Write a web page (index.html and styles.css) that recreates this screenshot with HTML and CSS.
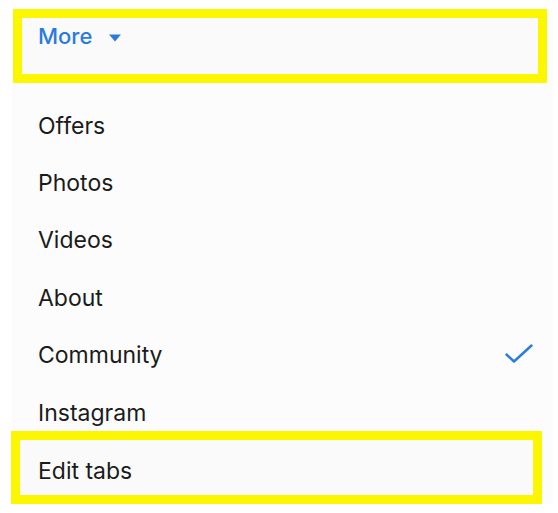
FILE: index.html
```html
<!DOCTYPE html>
<html>
<head>
<meta charset="utf-8">
<link rel="stylesheet" href="styles.css">
</head>
<body>
<div class="page">
  <div class="menu">
    <div class="more-box">
      <span class="more-label">More</span>
      <svg class="caret" width="12" height="8" viewBox="0 0 12 8"><path d="M0 0.5 H12 L6 7.5 Z" fill="#2a7be0"/></svg>
    </div>
    <ul class="items">
      <li class="item">Offers</li>
      <li class="item">Photos</li>
      <li class="item">Videos</li>
      <li class="item">About</li>
      <li class="item item-selected">Community
        <svg class="check" width="28" height="20" viewBox="0 0 28 20"><path d="M1.5 10.5 L9 17.5 L26.5 1.5" fill="none" stroke="#2a7be0" stroke-width="2.4" stroke-linecap="round" stroke-linejoin="round"/></svg>
      </li>
      <li class="item">Instagram</li>
      <li class="item edit-box">Edit tabs</li>
    </ul>
  </div>
</div>
</body>
</html>
```
FILE: styles.css
```css
html, body {
  margin: 0;
  padding: 0;
  background: #ffffff;
}
.page {
  padding-top: 9px;
  font-family: "Inter", "Liberation Sans", sans-serif;
}
.menu {
  margin-left: 12px;
  width: 541px;
  background: #fcfcfc;
}
.more-box {
  box-sizing: border-box;
  margin-left: 1px;
  width: 534px;
  height: 74px;
  border: 9px solid #fcf600;
  background: #fafafa;
  padding: 5px 0 0 16px;
  display: flex;
  align-items: flex-start;
  gap: 17px;
}
.more-label {
  color: #2a7be0;
  font-size: 22px;
  font-weight: 500;
  line-height: 26px;
}
.caret {
  margin-top: 11px;
}
.items {
  list-style: none;
  margin: 0;
  padding: 14px 0 0 0;
}
.item {
  height: 57.4px;
  display: flex;
  align-items: center;
  justify-content: space-between;
  padding: 0 20px 0 26px;
  font-size: 23px;
  color: #1b1b1b;
}
.check {
  margin-top: -2px;
}
.edit-box {
  box-sizing: border-box;
  margin: -10px 0 0 -1px;
  width: 531px;
  height: 73px;
  border: 9px solid #fcf600;
  background: #fafafa;
  padding: 6px 0 0 18px;
}
```
